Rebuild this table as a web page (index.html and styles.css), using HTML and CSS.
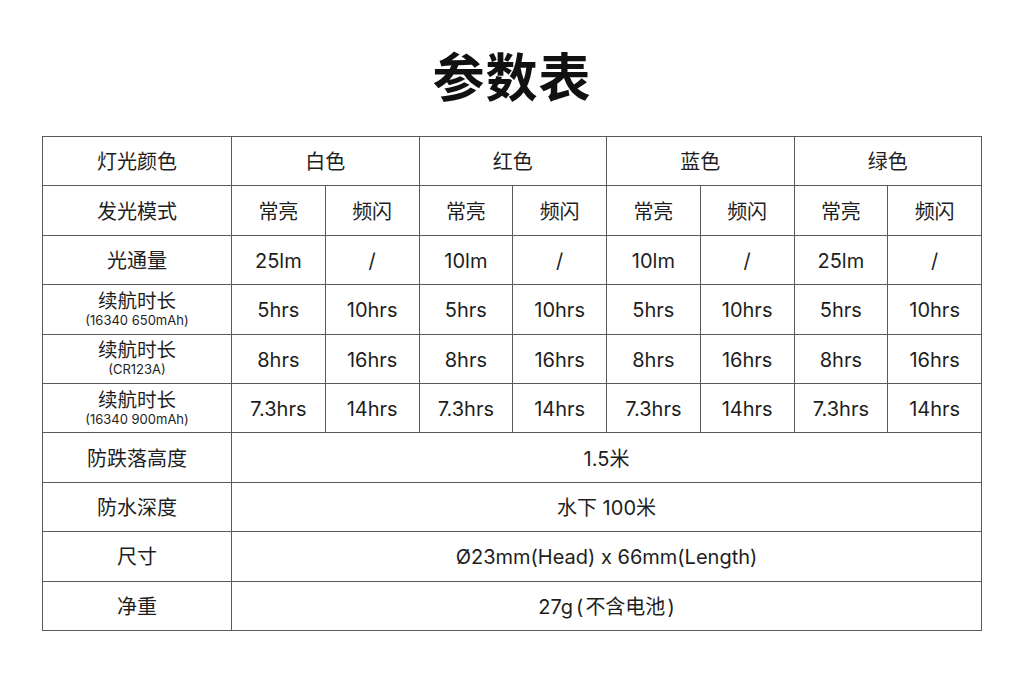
FILE: index.html
```html
<!DOCTYPE html>
<html lang="zh">
<head>
<meta charset="utf-8">
<title>参数表</title>
<link rel="stylesheet" href="styles.css">
</head>
<body>
<div class="page">
  <h1 class="title">参数表</h1>
  <table class="spec">
    <colgroup>
      <col class="c-label">
      <col><col><col><col><col><col><col><col>
    </colgroup>
    <tr>
      <td>灯光颜色</td>
      <td colspan="2">白色</td>
      <td colspan="2">红色</td>
      <td colspan="2">蓝色</td>
      <td colspan="2">绿色</td>
    </tr>
    <tr>
      <td>发光模式</td>
      <td>常亮</td><td>频闪</td>
      <td>常亮</td><td>频闪</td>
      <td>常亮</td><td>频闪</td>
      <td>常亮</td><td>频闪</td>
    </tr>
    <tr>
      <td>光通量</td>
      <td>25lm</td><td>/</td>
      <td>10lm</td><td>/</td>
      <td>10lm</td><td>/</td>
      <td>25lm</td><td>/</td>
    </tr>
    <tr>
      <td class="two"><span class="main">续航时长</span><span class="sub">(16340 650mAh)</span></td>
      <td>5hrs</td><td>10hrs</td>
      <td>5hrs</td><td>10hrs</td>
      <td>5hrs</td><td>10hrs</td>
      <td>5hrs</td><td>10hrs</td>
    </tr>
    <tr>
      <td class="two"><span class="main">续航时长</span><span class="sub">(CR123A)</span></td>
      <td>8hrs</td><td>16hrs</td>
      <td>8hrs</td><td>16hrs</td>
      <td>8hrs</td><td>16hrs</td>
      <td>8hrs</td><td>16hrs</td>
    </tr>
    <tr>
      <td class="two"><span class="main">续航时长</span><span class="sub">(16340 900mAh)</span></td>
      <td>7.3hrs</td><td>14hrs</td>
      <td>7.3hrs</td><td>14hrs</td>
      <td>7.3hrs</td><td>14hrs</td>
      <td>7.3hrs</td><td>14hrs</td>
    </tr>
    <tr>
      <td>防跌落高度</td>
      <td colspan="8">1.5米</td>
    </tr>
    <tr>
      <td>防水深度</td>
      <td colspan="8">水下 100米</td>
    </tr>
    <tr>
      <td>尺寸</td>
      <td colspan="8">Ø23mm(Head) x 66mm(Length)</td>
    </tr>
    <tr>
      <td>净重</td>
      <td colspan="8">27g<span class="paren-l">(</span>不含电池<span class="paren-r">)</span></td>
    </tr>
  </table>
</div>
</body>
</html>
```

FILE: styles.css
```css
html, body {
  margin: 0;
  padding: 0;
  background: #ffffff;
}

body {
  font-family: "Noto Sans CJK SC", "Noto Sans", sans-serif;
  color: #1e1e1e;
}

.page {
  width: 1024px;
  height: 683px;
  display: flex;
  flex-direction: column;
  align-items: center;
}

.title {
  margin: 0;
  height: 136px;
  display: flex;
  align-items: center;
  justify-content: center;
  font-size: 52px;
  font-weight: 700;
  color: #111;
  letter-spacing: 1px;
  padding-top: 12px;
  box-sizing: border-box;
}

.spec {
  border-collapse: collapse;
  table-layout: fixed;
  width: 939px;
}

.spec col {
  width: 93.75px;
}

.spec col.c-label {
  width: 189px;
}

.spec td {
  border: 1px solid #5a5a5a;
  height: 46.4px;
  padding: 2px 0 0;
  text-align: center;
  vertical-align: middle;
  font-family: "Inter", "Noto Sans CJK SC", sans-serif;
  font-size: 20px;
  line-height: 1;
  white-space: nowrap;
}

.spec td.two {
  height: 48.4px;
  padding-top: 0;
}

.spec .main {
  display: block;
  font-size: 19.5px;
  line-height: 24px;
  margin-top: -2px;
}

.spec .sub {
  display: block;
  font-size: 13px;
  line-height: 15px;
}

.spec .paren-l {
  margin: 0 2px 0 3px;
}

.spec .paren-r {
  margin: 0 0 0 2px;
}
```
